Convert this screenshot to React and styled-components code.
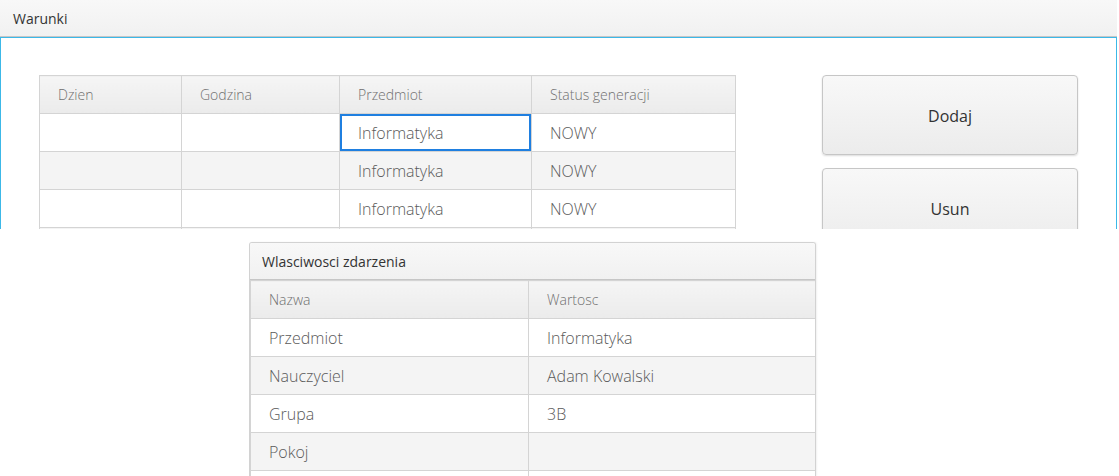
import React from "react";
import styled, { createGlobalStyle } from "styled-components";

const GlobalStyle = createGlobalStyle`
  html, body {
    margin: 0;
    padding: 0;
    background: #ffffff;
    overflow: hidden;
  }
  body {
    font-family: "Open Sans", "Liberation Sans", sans-serif;
  }
`;

const Page = styled.div`
  display: flex;
  flex-direction: column;
  gap: 13px;
  height: 476px;
  overflow: hidden;
`;

const TopPanel = styled.section`
  width: 1117px;
  height: 229px;
  overflow: hidden;
  display: flex;
  flex-direction: column;
`;

const PanelHeader = styled.div`
  height: 36px;
  flex-shrink: 0;
  display: flex;
  align-items: center;
  padding-left: ${({ $pad }) => $pad || 13}px;
  background: linear-gradient(#f8f8f8, #f1f1f1);
  border-bottom: 1px solid #c6c6c6;
  font-size: 14px;
  color: #333;
`;

const TopBody = styled.div`
  flex: 1;
  border: 1px solid #3cb8e8;
  border-bottom: none;
  padding: 37px 0 0 38px;
  display: flex;
  align-items: flex-start;
  gap: 86px;
`;

const Table = styled.table`
  border-collapse: collapse;
  table-layout: fixed;
  width: ${({ $width }) => $width}px;
  font-weight: 300;
`;

const HeadCell = styled.th`
  height: 37px;
  padding: 0 0 0 18px;
  text-align: left;
  font-size: 14px;
  font-weight: 300;
  color: #707070;
  background: linear-gradient(#f5f5f5, #ebebeb);
  border: 1px solid #d4d4d4;
`;

const Row = styled.tr`
  height: 38px;
  background: ${({ $alt }) => ($alt ? "#f4f4f4" : "#ffffff")};
`;

const Cell = styled.td`
  padding: 0 0 0 18px;
  font-size: 16px;
  color: #5a5a5a;
  border: 1px solid #d4d4d4;
  box-shadow: ${({ $selected }) => ($selected ? "inset 0 0 0 2px #1f7fe0" : "none")};
  white-space: nowrap;
`;

const ButtonColumn = styled.div`
  display: flex;
  flex-direction: column;
  gap: 13px;
  width: 256px;
`;

const Button = styled.button`
  height: 80px;
  border: 1px solid #c6c6c6;
  border-radius: 4px;
  background: linear-gradient(#f8f8f8, #ececec);
  box-shadow: 0 1px 2px rgba(0, 0, 0, 0.14);
  font-family: "Open Sans", "Liberation Sans", sans-serif;
  font-size: 16px;
  color: #333;
  padding-top: 2px;
`;

const PropsPanel = styled.section`
  margin-left: 249px;
  width: 565px;
  flex: 1;
  border: 1px solid #d2d2d2;
  border-bottom: none;
  border-radius: 3px 3px 0 0;
  box-shadow: 1px 0 2px rgba(0, 0, 0, 0.06);
  display: flex;
  flex-direction: column;
  overflow: hidden;
`;

const topCols = [142, 158, 192, 204];
const topRows = [
  { alt: false, selected: true },
  { alt: true },
  { alt: false },
  { alt: true },
];

const props = [
  ["Przedmiot", "Informatyka"],
  ["Nauczyciel", "Adam Kowalski"],
  ["Grupa", "3B"],
  ["Pokoj", ""],
  ["", ""],
];

export default function App() {
  return (
    <>
      <GlobalStyle />
      <Page>
        <TopPanel>
          <PanelHeader>Warunki</PanelHeader>
          <TopBody>
            <Table $width={696}>
              <colgroup>
                {topCols.map((w, i) => (
                  <col key={i} style={{ width: w }} />
                ))}
              </colgroup>
              <thead>
                <tr>
                  <HeadCell>Dzien</HeadCell>
                  <HeadCell>Godzina</HeadCell>
                  <HeadCell>Przedmiot</HeadCell>
                  <HeadCell>Status generacji</HeadCell>
                </tr>
              </thead>
              <tbody>
                {topRows.map((r, i) => (
                  <Row key={i} $alt={r.alt}>
                    <Cell />
                    <Cell />
                    <Cell $selected={r.selected}>{i < 3 ? "Informatyka" : ""}</Cell>
                    <Cell>{i < 3 ? "NOWY" : ""}</Cell>
                  </Row>
                ))}
              </tbody>
            </Table>
            <ButtonColumn>
              <Button>Dodaj</Button>
              <Button>Usun</Button>
            </ButtonColumn>
          </TopBody>
        </TopPanel>
        <PropsPanel>
          <PanelHeader $pad={12}>Wlasciwosci zdarzenia</PanelHeader>
          <Table $width={565}>
            <colgroup>
              <col style={{ width: 278 }} />
              <col style={{ width: 287 }} />
            </colgroup>
            <thead>
              <tr>
                <HeadCell>Nazwa</HeadCell>
                <HeadCell>Wartosc</HeadCell>
              </tr>
            </thead>
            <tbody>
              {props.map(([k, v], i) => (
                <Row key={i} $alt={i % 2 === 1}>
                  <Cell>{k}</Cell>
                  <Cell>{v}</Cell>
                </Row>
              ))}
            </tbody>
          </Table>
        </PropsPanel>
      </Page>
    </>
  );
}
